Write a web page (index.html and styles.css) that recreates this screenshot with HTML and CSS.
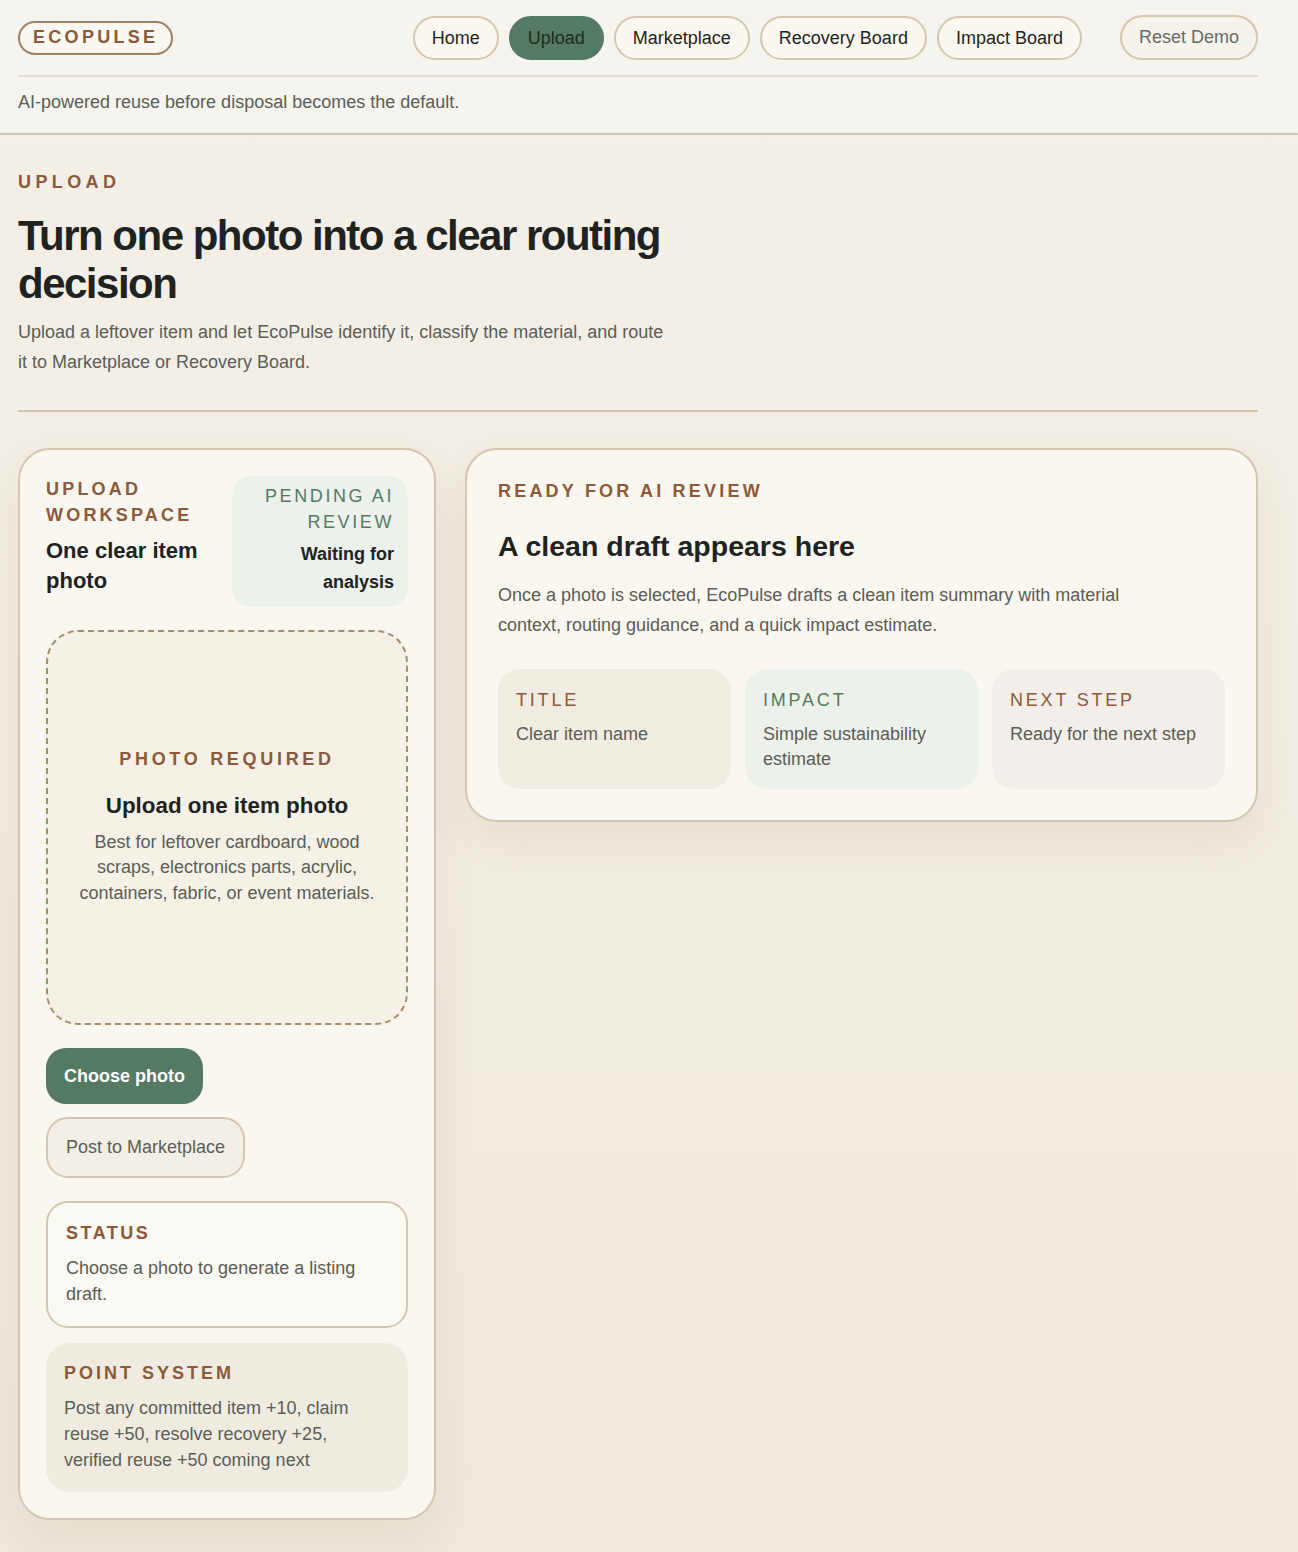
FILE: index.html
```html
<!DOCTYPE html>
<html lang="en">
<head>
    <meta charset="UTF-8">
    <meta name="viewport" content="width=device-width, initial-scale=1.0">
    <title>EcoPulse - Upload</title>
    <link rel="stylesheet" href="styles.css">
</head>
<body>
    <header class="site-header">
        <div class="shell">
            <div class="header-row">
                <span class="logo">ECOPULSE</span>
                <nav class="nav">
                    <a class="nav-link" href="#">Home</a>
                    <a class="nav-link active" href="#">Upload</a>
                    <a class="nav-link" href="#">Marketplace</a>
                    <a class="nav-link" href="#">Recovery Board</a>
                    <a class="nav-link" href="#">Impact Board</a>
                </nav>
                <button class="reset-btn">Reset Demo</button>
            </div>
            <p class="tagline">AI-powered reuse before disposal becomes the default.</p>
        </div>
    </header>

    <main class="shell">
        <section class="hero">
            <p class="hero-eyebrow">UPLOAD</p>
            <h1>Turn one photo into a clear routing decision</h1>
            <p class="hero-text">Upload a leftover item and let EcoPulse identify it, classify the material, and route it to Marketplace or Recovery Board.</p>
        </section>

        <div class="layout">
            <section class="card upload-card">
                <div class="upload-head">
                    <div class="upload-title">
                        <p class="eyebrow">UPLOAD WORKSPACE</p>
                        <h2>One clear item photo</h2>
                    </div>
                    <div class="pending">
                        <p class="pending-label">PENDING AI REVIEW</p>
                        <strong>Waiting for analysis</strong>
                    </div>
                </div>

                <div class="dropzone">
                    <p class="eyebrow drop-eyebrow">PHOTO REQUIRED</p>
                    <h3>Upload one item photo</h3>
                    <p class="drop-text">Best for leftover cardboard, wood scraps, electronics parts, acrylic, containers, fabric, or event materials.</p>
                </div>

                <button class="btn-primary">Choose photo</button>
                <button class="btn-soft">Post to Marketplace</button>

                <div class="status-box">
                    <p class="eyebrow small-eyebrow">STATUS</p>
                    <p class="box-text">Choose a photo to generate a listing draft.</p>
                </div>

                <div class="points-box">
                    <p class="eyebrow small-eyebrow">POINT SYSTEM</p>
                    <p class="box-text">Post any committed item +10, claim reuse +50, resolve recovery +25, verified reuse +50 coming next</p>
                </div>
            </section>

            <section class="card draft-card">
                <p class="eyebrow">READY FOR AI REVIEW</p>
                <h2 class="draft-title">A clean draft appears here</h2>
                <p class="draft-text">Once a photo is selected, EcoPulse drafts a clean item summary with material context, routing guidance, and a quick impact estimate.</p>

                <div class="mini-grid">
                    <div class="mini mini-title">
                        <p class="mini-label">TITLE</p>
                        <p class="mini-text">Clear item name</p>
                    </div>
                    <div class="mini mini-impact">
                        <p class="mini-label">IMPACT</p>
                        <p class="mini-text">Simple sustainability estimate</p>
                    </div>
                    <div class="mini mini-next">
                        <p class="mini-label">NEXT STEP</p>
                        <p class="mini-text">Ready for the next step</p>
                    </div>
                </div>
            </section>
        </div>
    </main>
</body>
</html>
```

FILE: styles.css
```css
:root {
    --ink: #1e231f;
    --muted: #5b5d56;
    --brown: #8a5a3b;
    --green: #557a63;
    --line: #d4c7af;
    --card: #faf7f1;
    --sage: #edf1eb;
}

* {
    box-sizing: border-box;
}

html, body {
    margin: 0;
    padding: 0;
}

body {
    font-family: "Liberation Sans", Arial, sans-serif;
    font-size: 18px;
    color: var(--ink);
    background: linear-gradient(180deg, #f4f0e8 0%, #efe9de 100%);
    min-height: 1552px;
}

p, h1, h2, h3 {
    margin: 0;
}

.shell {
    width: 1240px;
    margin-left: 18px;
}

/* header */

.site-header {
    background-color: #f6f4ee;
    border-bottom: 2px solid var(--line);
    padding: 16px 0 18px;
}

.header-row {
    display: flex;
    align-items: center;
    padding-bottom: 15px;
    border-bottom: 2px solid #e5dccb;
}

.logo {
    display: inline-block;
    border: 2px solid #9f8262;
    border-radius: 999px;
    padding: 5px 13px 6px 13px;
    font-weight: bold;
    font-size: 18px;
    line-height: 19px;
    letter-spacing: 3.3px;
    color: var(--brown);
    background-color: #fbf8f2;
}

.nav {
    margin-left: auto;
    display: flex;
    gap: 10px;
}

.nav-link {
    display: inline-flex;
    align-items: center;
    height: 44px;
    padding: 0 17px;
    border: 2px solid var(--line);
    border-radius: 999px;
    background-color: #fbf8f1;
    color: var(--ink);
    text-decoration: none;
    font-size: 18px;
}

.nav-link.active {
    background-color: var(--green);
    border-color: var(--green);
    color: #1c2a21;
}

.reset-btn {
    margin-left: 38px;
    height: 45px;
    padding: 0 17px;
    border: 2px solid var(--line);
    border-radius: 999px;
    background-color: #f6f3ec;
    color: #6a6a64;
    font-family: inherit;
    font-size: 18px;
    margin-top: -1px;
}

.tagline {
    margin-top: 12px;
    line-height: 26px;
    color: var(--muted);
}

/* hero */

.hero {
    padding-top: 37px;
    padding-bottom: 33px;
    border-bottom: 2px solid var(--line);
}

.hero-eyebrow {
    font-weight: bold;
    line-height: 20px;
    letter-spacing: 4.4px;
    color: var(--brown);
}

.hero h1 {
    margin-top: 20px;
    max-width: 660px;
    font-size: 42px;
    line-height: 48px;
    letter-spacing: -1.5px;
}

.hero-text {
    margin-top: 9px;
    max-width: 650px;
    line-height: 30px;
    color: var(--muted);
}

/* layout */

.layout {
    display: grid;
    grid-template-columns: 418px 1fr;
    gap: 29px;
    align-items: start;
    margin-top: 36px;
    padding-bottom: 33px;
}

.card {
    background-color: var(--card);
    border: 2px solid var(--line);
    border-radius: 32px;
    box-shadow: 0 18px 44px rgba(120, 96, 60, 0.09);
}

.eyebrow {
    font-weight: bold;
    line-height: 20px;
    letter-spacing: 3.2px;
    color: var(--brown);
}

/* upload card */

.upload-card {
    padding: 26px;
    display: flex;
    flex-direction: column;
    align-items: flex-start;
}

.upload-head {
    display: flex;
    gap: 16px;
    width: 100%;
    align-items: flex-start;
}

.upload-title {
    flex: 1;
}

.upload-title .eyebrow {
    line-height: 26px;
}

.upload-title h2 {
    margin-top: 8px;
    font-size: 22px;
    line-height: 30px;
}

.pending {
    width: 176px;
    flex-shrink: 0;
    background-color: var(--sage);
    border-radius: 20px;
    padding: 7px 14px 11px;
    text-align: right;
}

.pending-label {
    line-height: 26px;
    letter-spacing: 2.6px;
    color: var(--green);
}

.pending strong {
    display: block;
    margin-top: 5px;
    line-height: 28px;
}

.dropzone {
    width: 100%;
    min-height: 395px;
    margin-top: 23px;
    border: 2px dashed #a68e6d;
    border-radius: 32px;
    background-color: #f5f1e7;
    padding: 24px;
    display: flex;
    flex-direction: column;
    align-items: center;
    justify-content: center;
    text-align: center;
}

.drop-eyebrow {
    letter-spacing: 3.7px;
}

.dropzone h3 {
    margin-top: 22px;
    font-size: 22.4px;
    line-height: 30px;
}

.drop-text {
    margin-top: 9px;
    line-height: 25.5px;
    color: var(--muted);
}

.btn-primary {
    margin-top: 23px;
    height: 56px;
    padding: 0 18px;
    border: none;
    border-radius: 20px;
    background-color: var(--green);
    color: #ffffff;
    font-family: inherit;
    font-size: 18px;
    font-weight: bold;
}

.btn-soft {
    margin-top: 13px;
    height: 61px;
    padding: 0 18px;
    border: 2px solid var(--line);
    border-radius: 22px;
    background-color: #f3efe7;
    color: var(--muted);
    font-family: inherit;
    font-size: 18px;
}

.status-box {
    width: 100%;
    margin-top: 23px;
    padding: 18px 18px 19px;
    border: 2px solid var(--line);
    border-radius: 22px;
    background-color: #fbf9f4;
}

.points-box {
    width: 100%;
    margin-top: 15px;
    padding: 18px 18px 19px;
    border-radius: 24px;
    background-color: #f0ebe1;
}

.small-eyebrow {
    line-height: 24px;
    letter-spacing: 3px;
}

.status-box .small-eyebrow {
    letter-spacing: 2.5px;
}

.box-text {
    margin-top: 10px;
    line-height: 26px;
    color: var(--muted);
}

.status-box .box-text {
    margin-top: 11px;
    line-height: 25.5px;
}

/* draft card */

.draft-card {
    padding: 31px;
}

.draft-title {
    margin-top: 26px;
    font-size: 28.5px;
    line-height: 38px;
}

.draft-text {
    margin-top: 15px;
    max-width: 660px;
    line-height: 30px;
    color: var(--muted);
}

.mini-grid {
    margin-top: 29px;
    display: grid;
    grid-template-columns: repeat(3, 1fr);
    gap: 14px;
}

.mini {
    min-height: 118px;
    padding: 18px;
    border-radius: 22px;
}

.mini-title {
    background-color: #f1ece2;
}

.mini-impact {
    background-color: var(--sage);
}

.mini-next {
    background-color: #f3eee9;
}

.mini-label {
    line-height: 26px;
    letter-spacing: 2.8px;
    color: var(--brown);
}

.mini-impact .mini-label {
    color: var(--green);
}

.mini-text {
    margin-top: 9px;
    line-height: 24.5px;
    color: var(--muted);
}
```
